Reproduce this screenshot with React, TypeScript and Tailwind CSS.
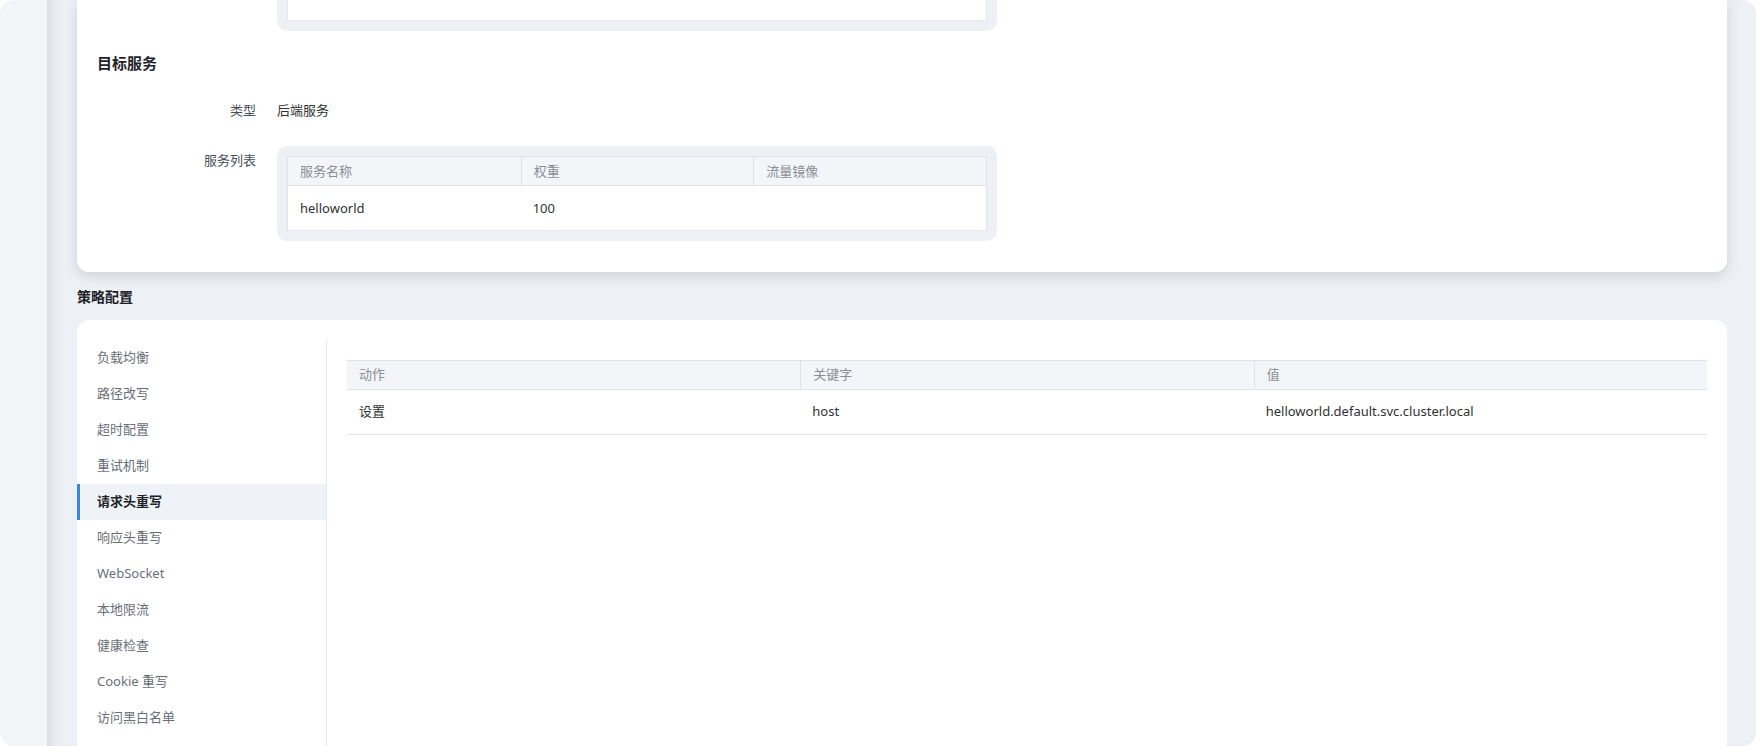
const policyMenu = [
  '负载均衡',
  '路径改写',
  '超时配置',
  '重试机制',
  '请求头重写',
  '响应头重写',
  'WebSocket',
  '本地限流',
  '健康检查',
  'Cookie 重写',
  '访问黑白名单',
];

const activeMenu = '请求头重写';

function HeaderRow({ cols }: { cols: string[] }) {
  return (
    <div className="grid h-[30px] grid-cols-3 border-y border-[#dfe3e8] bg-[#f3f5f8] text-[#8a8f97]">
      {cols.map((c, i) => (
        <div
          key={c}
          className={`flex items-center px-3 ${i > 0 ? 'border-l border-[#dfe3e8]' : ''}`}
        >
          {c}
        </div>
      ))}
    </div>
  );
}

function BodyRow({ cells }: { cells: string[] }) {
  return (
    <div className="grid h-[45px] grid-cols-3 border-b border-[#e4e7ec] bg-white text-[#303133]">
      {cells.map((c, i) => (
        <div key={i} className="flex items-center px-3">
          {c}
        </div>
      ))}
    </div>
  );
}

export default function App() {
  return (
    <div className="h-[746px] w-full overflow-hidden bg-white font-['Noto_Sans','Noto_Sans_CJK_SC',sans-serif] text-[13px] text-[#303133]">
      <div className="flex h-full overflow-hidden rounded-[14px] bg-[#f4f5f9]">
        <div className="w-[47px] shrink-0" />
        <main className="flex-1 bg-[#edf0f4] pl-[30px] pr-[29px] shadow-[inset_14px_0_14px_-10px_rgba(0,0,0,0.09)]">
          {/* Route detail card (scrolled) */}
          <section className="rounded-b-[12px] bg-white px-5 pb-[31px] shadow-[0_4px_14px_rgba(0,0,0,0.13)]">
            <div className="ml-[180px] w-[720px] rounded-b-[10px] bg-[#edf0f4] px-[10px] pb-[10px]">
              <div className="h-[21px] border-x border-b border-[#e4e7ec] bg-white" />
            </div>

            <h3 className="mt-[21px] text-[15px] font-bold leading-[22px] text-[#1f2329]">目标服务</h3>

            <div className="mt-[26px] flex gap-[21px] leading-5">
              <div className="w-[159px] text-right text-[#4a4f57]">类型</div>
              <div>后端服务</div>
            </div>

            <div className="mt-[26px] flex items-start gap-[21px] leading-5">
              <div className="w-[159px] pt-1 text-right text-[#4a4f57]">服务列表</div>
              <div className="w-[720px] rounded-[10px] bg-[#edf0f4] p-[10px]">
                <div className="border-x border-[#dfe3e8]">
                  <HeaderRow cols={['服务名称', '权重', '流量镜像']} />
                  <BodyRow cells={['helloworld', '100', '']} />
                </div>
              </div>
            </div>
          </section>

          <h3 className="mt-[15px] text-[14px] font-bold leading-5 text-[#1f2329]">策略配置</h3>

          {/* Policy config card */}
          <section className="mt-[13px] flex h-[500px] rounded-[12px] bg-white pt-5">
            <nav className="w-[250px] shrink-0 border-r border-[#e4e7ec]">
              {policyMenu.map((item) => {
                const active = item === activeMenu;
                return (
                  <div
                    key={item}
                    className={`flex h-9 items-center border-l-[3px] pl-[17px] ${
                      active
                        ? 'border-[#3a87e0] bg-[#eff2f7] font-semibold text-[#1f2329]'
                        : 'border-transparent text-[#6a6f77]'
                    }`}
                  >
                    {item}
                  </div>
                );
              })}
            </nav>
            <div className="flex-1 px-5 pt-5">
              <HeaderRow cols={['动作', '关键字', '值']} />
              <BodyRow cells={['设置', 'host', 'helloworld.default.svc.cluster.local']} />
            </div>
          </section>
        </main>
      </div>
    </div>
  );
}
